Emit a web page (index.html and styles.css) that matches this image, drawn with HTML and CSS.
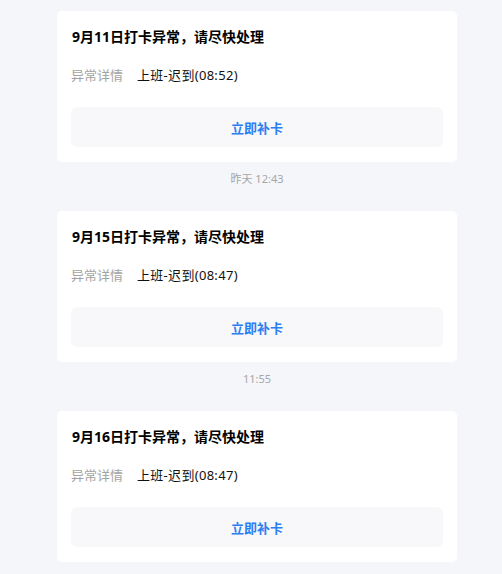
FILE: index.html
```html
<!DOCTYPE html>
<html lang="zh-CN">
<head>
<meta charset="utf-8">
<title>打卡异常</title>
<link rel="stylesheet" href="styles.css">
</head>
<body>
<div class="feed">
  <div class="card">
    <div class="card-title">9月11日打卡异常，请尽快处理</div>
    <div class="detail"><span class="detail-label">异常详情</span><span class="detail-value">上班-迟到(08:52)</span></div>
    <div class="action">立即补卡</div>
  </div>
  <div class="stamp">昨天 12:43</div>
  <div class="card">
    <div class="card-title">9月15日打卡异常，请尽快处理</div>
    <div class="detail"><span class="detail-label">异常详情</span><span class="detail-value">上班-迟到(08:47)</span></div>
    <div class="action">立即补卡</div>
  </div>
  <div class="stamp">11:55</div>
  <div class="card">
    <div class="card-title">9月16日打卡异常，请尽快处理</div>
    <div class="detail"><span class="detail-label">异常详情</span><span class="detail-value">上班-迟到(08:47)</span></div>
    <div class="action">立即补卡</div>
  </div>
</div>
</body>
</html>
```
FILE: styles.css
```css
html, body {
  margin: 0;
  padding: 0;
  background: #f5f6fa;
}
body {
  font-family: "Noto Sans", "Noto Sans CJK SC", sans-serif;
  color: #111;
}
.feed {
  width: 400px;
  margin-left: 57px;
  padding-top: 11px;
  display: flex;
  flex-direction: column;
}
.card {
  background: #fff;
  border-radius: 5px;
  padding: 15px 14px 15px;
  display: flex;
  flex-direction: column;
}
.card-title {
  font-size: 14px;
  font-weight: 700;
  line-height: 22px;
  color: #000;
  padding-left: 1px;
}
.detail {
  margin-top: 17px;
  font-size: 13px;
  line-height: 20px;
  display: flex;
  gap: 14px;
}
.detail-label {
  color: #a3a3a3;
}
.detail-value {
  color: #111;
  letter-spacing: 0.3px;
}
.action {
  margin-top: 22px;
  height: 40px;
  background: #f8f8fa;
  border-radius: 6px;
  display: flex;
  align-items: center;
  justify-content: center;
  color: #2b7ff3;
  font-size: 13px;
  font-weight: 700;
}
.stamp {
  margin: 9px 0 24px;
  text-align: center;
  font-size: 11px;
  line-height: 16px;
  color: #a6a6a6;
}
```
